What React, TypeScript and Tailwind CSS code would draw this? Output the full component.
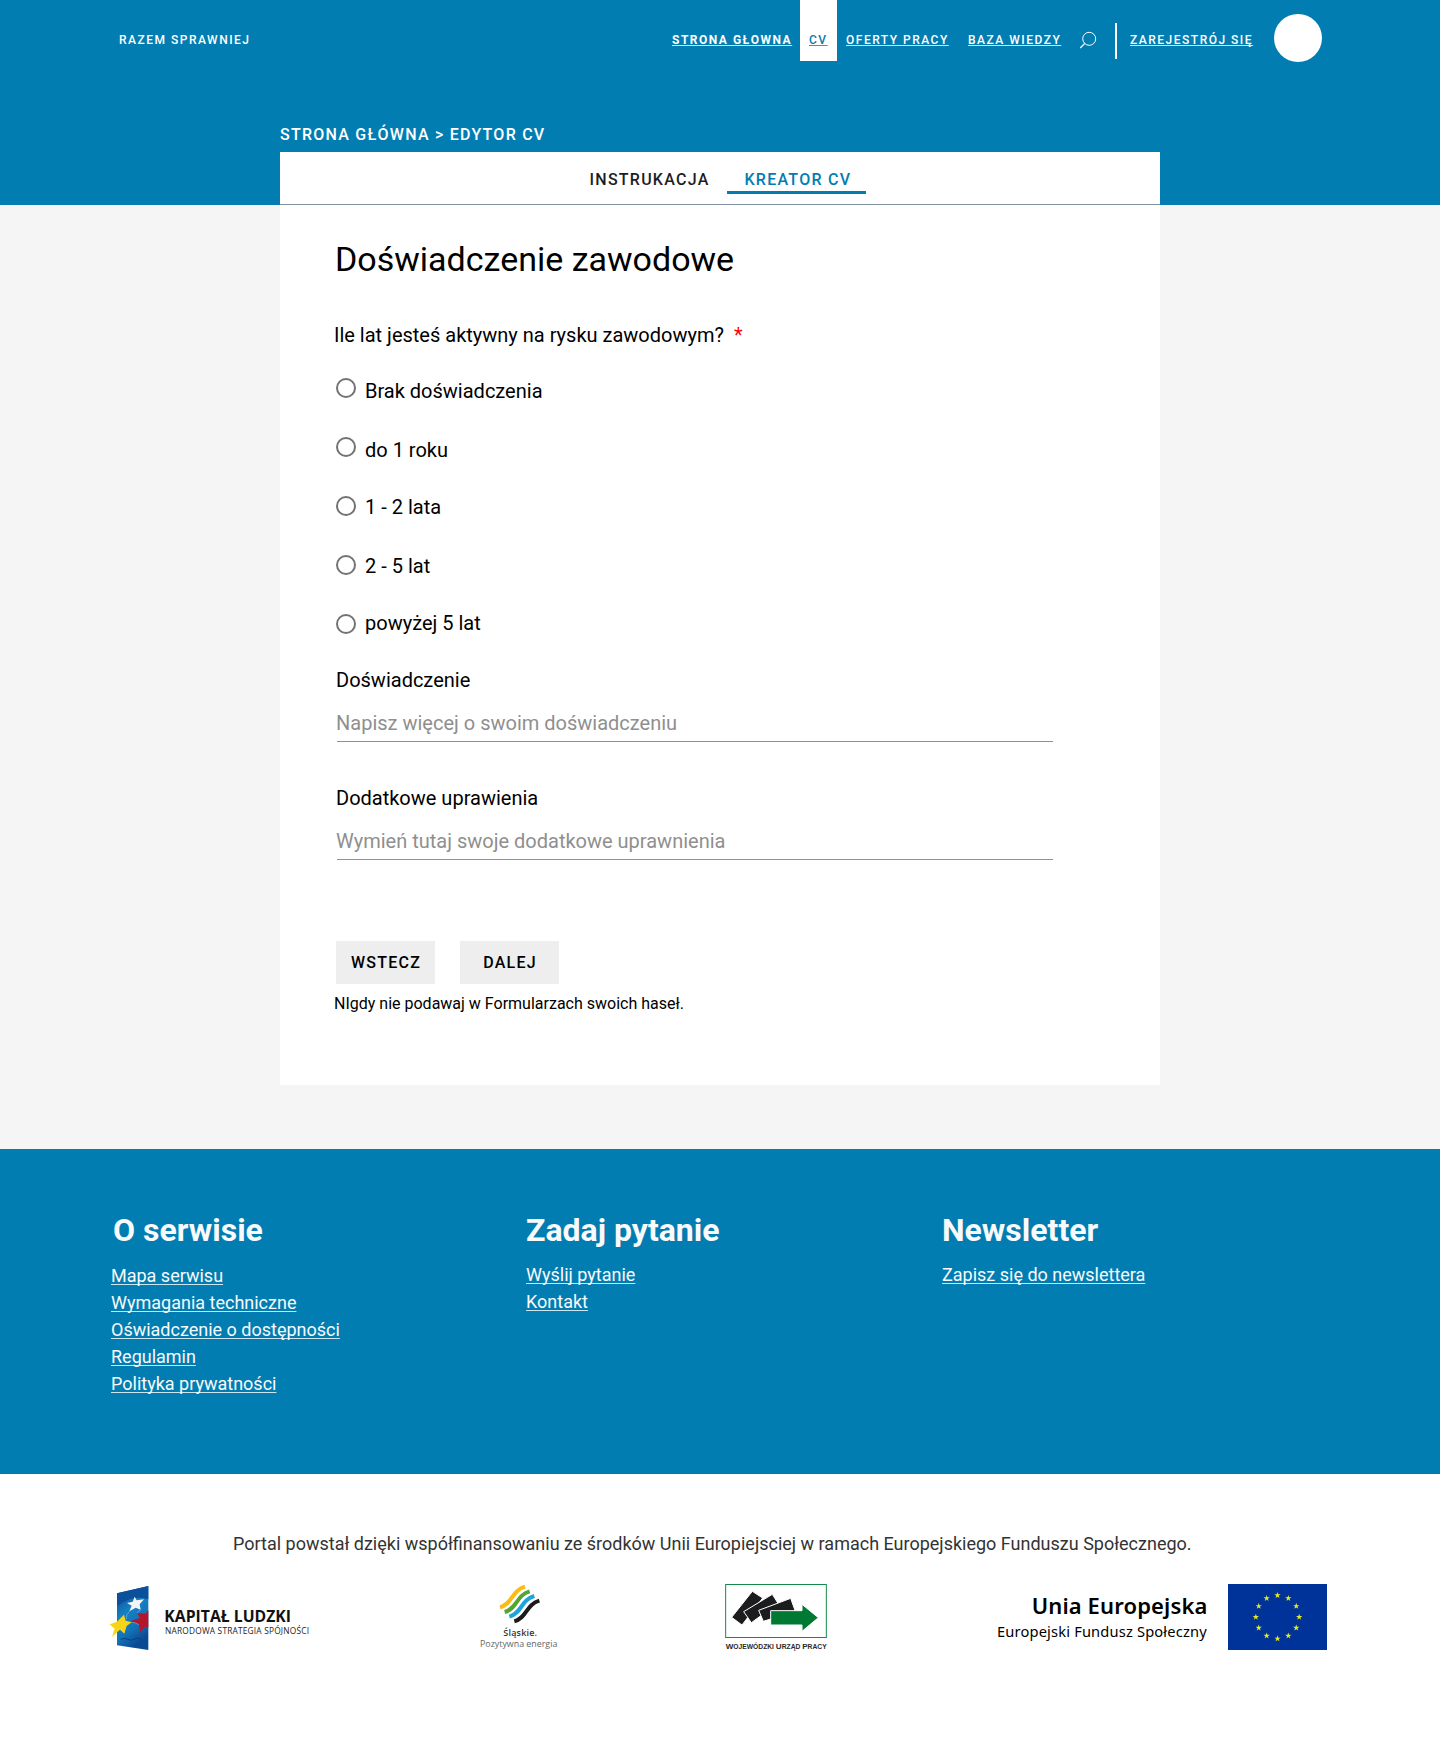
const navLink =
  "block w-fit whitespace-nowrap text-[12px] leading-4 font-medium tracking-[1.5px] underline decoration-1 underline-offset-[1px] [text-decoration-skip-ink:none]";

const options = [
  { label: "Brak doświadczenia", shift: "pt-[1px]" },
  { label: "do 1 roku", shift: "pt-[1px]" },
  { label: "1 - 2 lata", shift: "-mt-[1px]" },
  { label: "2 - 5 lat", shift: "-mt-[1px]" },
  { label: "powyżej 5 lat", shift: "-mt-[3px]" },
];

function SearchIcon() {
  return (
    <svg width="18" height="18" viewBox="0 0 18 18" fill="none" stroke="#fff" strokeWidth="1">
      <circle cx="10.2" cy="7.8" r="6.5" />
      <path d="M5.8 12.4 1.2 17" strokeWidth="1.3" />
    </svg>
  );
}

function Header() {
  return (
    <header className="flex h-[205px] flex-col bg-[#027db1] text-white">
      <div className="flex h-[76px] items-start pl-[119px]">
        <span className="mt-8 w-[553px] whitespace-nowrap text-[12px] leading-4 font-medium tracking-[1.5px]">
          RAZEM SPRAWNIEJ
        </span>
        <nav className="flex items-start">
          <div className="w-32 pt-8">
            <a className="block w-fit whitespace-nowrap text-[12px] leading-4 font-bold tracking-[1.5px] underline decoration-white/80 decoration-1 underline-offset-[1px] [text-decoration-skip-ink:none]">
              STRONA GŁOWNA
            </a>
          </div>
          <div className="h-[61px] w-[37px] bg-white pt-8 pl-[9px] text-[#027db1]">
            <a className={`${navLink} decoration-[#027db1]/80`}>CV</a>
          </div>
          <div className="ml-[9px] w-[122px] pt-8">
            <a className={`${navLink} decoration-white/80`}>OFERTY PRACY</a>
          </div>
          <div className="w-[111px] pt-8">
            <a className={`${navLink} decoration-white/80`}>BAZA WIEDZY</a>
          </div>
          <div className="mt-[31px] w-9">
            <SearchIcon />
          </div>
          <div className="mt-[23px] h-9 w-[2px] bg-white" />
          <div className="ml-[13px] w-36 pt-8">
            <a className={`${navLink} decoration-white/80`}>ZAREJESTRÓJ SIĘ</a>
          </div>
          <div className="mt-[14px] size-12 rounded-full bg-white" />
        </nav>
      </div>
      <div className="mx-auto mt-[46px] w-[880px]">
        <p className="h-[30px] text-[16px] leading-[25px] font-medium tracking-[1.25px]">
          STRONA GŁÓWNA &gt; EDYTOR CV
        </p>
        <div className="flex h-[53px] border-b border-[#7f93a1] bg-white pt-[15px] text-[16px] leading-[25px] font-medium tracking-[1.25px]">
          <a className="ml-[309px] w-[138px] pl-[0.5px] text-[#1d1d1f]">INSTRUKACJA</a>
          <a className="h-[27px] w-[139px] border-b-[3px] border-[#027db1] pl-[17.5px] text-[#027db1]">
            KREATOR CV
          </a>
        </div>
      </div>
    </header>
  );
}

function Field({ label, placeholder }: { label: string; placeholder: string }) {
  return (
    <div className="h-[118px] pl-14">
      <p className="leading-6">{label}</p>
      <div className="mt-[19px] ml-px h-[31px] w-[716px] border-b border-[#8a949c] leading-6 text-[#8f8f8f]">
        <span className="-ml-px">{placeholder}</span>
      </div>
    </div>
  );
}

function Form() {
  return (
    <main className="mx-auto h-[880px] w-[880px] bg-white text-[20px] text-black">
      <h1 className="pt-[34px] pl-[55px] text-[34px] leading-10">Doświadczenie zawodowe</h1>
      <p className="mt-11 pl-[54px] leading-6">
        Ile lat jesteś aktywny na rysku zawodowym?
        <span className="ml-[10px] text-[#ff0000]">*</span>
      </p>
      <div className="mt-[31px] pl-14">
        {options.map((o) => (
          <label key={o.label} className="flex h-[59px] items-start">
            <span className="size-5 rounded-full border-2 border-[#737373]" />
            <span className={`ml-[9px] leading-6 ${o.shift}`}>{o.label}</span>
          </label>
        ))}
      </div>
      <div className="-mt-[5px]">
        <Field label="Doświadczenie" placeholder="Napisz więcej o swoim doświadczeniu" />
        <Field label="Dodatkowe uprawienia" placeholder="Wymień tutaj swoje dodatkowe uprawnienia" />
      </div>
      <div className="mt-[37px] flex gap-[25px] pl-14 text-[16px] leading-[25px] font-medium tracking-[1.25px]">
        <button className="h-[43px] w-[99px] bg-[#eeeeee] pb-px pl-px">WSTECZ</button>
        <button className="h-[43px] w-[99px] bg-[#eeeeee] pb-px pl-px">DALEJ</button>
      </div>
      <p className="mt-[7px] pl-[54px] text-[16px] leading-[25px]">
        NIgdy nie podawaj w Formularzach swoich haseł.
      </p>
    </main>
  );
}

function FooterColumn({ title, links, className, titleClass }: { title: string; links: string[]; className: string; titleClass: string }) {
  return (
    <div className={className}>
      <h2 className={`text-[32px] leading-[38px] font-bold ${titleClass}`}>{title}</h2>
      <ul className="text-[18px] leading-[27px]">
        {links.map((l) => (
          <li key={l}>
            <a className="underline decoration-white/80 decoration-1 underline-offset-2 [text-decoration-skip-ink:none]">{l}</a>
          </li>
        ))}
      </ul>
    </div>
  );
}

function HumanCapitalLogo() {
  return (
    <svg width="201" height="75" viewBox="27 30 603 225">
      <defs>
        <linearGradient id="sail" x1="0" y1="0" x2="0.4" y2="1">
          <stop offset="0" stopColor="#0a3f86" />
          <stop offset="0.45" stopColor="#1680c4" />
          <stop offset="0.75" stopColor="#1272b8" />
          <stop offset="1" stopColor="#0a4a94" />
        </linearGradient>
      </defs>
      <path d="M51 70 145 48V240L51 226Z" fill="url(#sail)" />
      <path d="M51 70 145 48V88Q100 72 51 108Z" fill="#0c4f9a" />
      <path d="M62 208q12-6 22 0t20-1 20 2" fill="none" stroke="#0b3f80" strokeWidth="3" />
      <path d="M104 80 110 91 132 88 119 103 122 119 107 113 88 124 95 107 81 99 98 95Z" fill="#f2f4f6" />
      <path d="M145 121 136 131 112 129 119 144 92 153 117 164 121 188 134 170 145 172Z" fill="#b3152a" />
      <path d="M72 134 77 152 95 157 80 168 73 191 60 179 36 200 44 176 29 163 51 155Z" fill="#f7d516" />
      <path d="M88 124Q78 132 79 148M122 119Q116 122 112 129M95 157 Q104 156 117 164" fill="none" stroke="#6fb4de" strokeWidth="2" />
      <text x="193" y="157" fontFamily="Open Sans, sans-serif" fontWeight="700" fontSize="47" textLength="380" lengthAdjust="spacingAndGlyphs" fill="#111">KAPITAŁ LUDZKI</text>
      <text x="195" y="192" fontFamily="Open Sans, sans-serif" fontSize="25" textLength="432" fill="#222">NARODOWA STRATEGIA SPÓJNOŚCI</text>
    </svg>
  );
}

function SilesiaLogo() {
  const wave = "M0 62C38 52 34 12 75 0";
  return (
    <svg width="82" height="75" viewBox="54 30 246 225">
      <g fill="none" strokeWidth="12">
        <path d={wave} transform="translate(120 50)" stroke="#fbba16" />
        <path d={wave} transform="translate(134 64)" stroke="#55a532" />
        <path d={wave} transform="translate(148 78)" stroke="#1fa3dc" />
        <path d={wave} transform="translate(163 92)" stroke="#1b1b1d" />
      </g>
      <text x="130" y="198" fontFamily="Open Sans, sans-serif" fontWeight="600" fontSize="27" textLength="101" fill="#333">Śląskie.</text>
      <text x="60" y="232" fontFamily="Open Sans, sans-serif" fontWeight="400" fontSize="28" textLength="232" lengthAdjust="spacingAndGlyphs" fill="#666">Pozytywna energia</text>
    </svg>
  );
}

function LabourOfficeLogo() {
  return (
    <svg width="104" height="75" viewBox="42 30 312 225">
      <rect x="47" y="43.5" width="302" height="159" fill="#fff" stroke="#14894a" strokeWidth="3" />
      <g fill="#1c1c1e" stroke="#fff" strokeWidth="3">
        <path d="M65 142 127 64 158 84 96 165Z" />
        <path d="M101 125 187 73 204 100 124 158Z" />
        <path d="M146 121 242 85 256 124 160 154Z" />
      </g>
      <path d="M182 122H276V103L325 143 276 184V165H182Z" fill="#007a33" stroke="#fff" strokeWidth="3" />
      <text x="47" y="237" fontFamily="Liberation Sans, sans-serif" fontWeight="700" fontSize="20" textLength="303" lengthAdjust="spacingAndGlyphs" fill="#2a2a2a">
        <tspan fontSize="24">W</tspan>OJEWÓDZKI <tspan fontSize="24">U</tspan>RZĄD <tspan fontSize="24">P</tspan>RACY
      </text>
    </svg>
  );
}

function EuropeanUnionLogo() {
  const star = "M0-9 2.1-2.8H8.6L3.4 1.1 5.3 7.3 0 3.6-5.3 7.3-3.4 1.1-8.6-2.8H-2.1Z";
  return (
    <svg width="332" height="75" viewBox="48 30 996 225">
      <text x="155" y="132" fontFamily="Noto Sans, sans-serif" fontWeight="600" fontSize="66" textLength="527" fill="#000">Unia Europejska</text>
      <text x="51" y="200" fontFamily="Noto Sans, sans-serif" fontSize="44" textLength="629" fill="#000">Europejski Fundusz Społeczny</text>
      <rect x="744" y="42" width="297" height="198" fill="#003399" />
      {Array.from({ length: 12 }, (_, i) => {
        const a = (i * Math.PI) / 6;
        return (
          <path key={i} d={star} fill="#e3e829" transform={`translate(${892.5 + 65 * Math.sin(a)} ${141 - 65 * Math.cos(a)}) scale(1.1)`} />
        );
      })}
    </svg>
  );
}

export default function App() {
  return (
    <div className="h-[1737px] w-[1440px] overflow-hidden bg-white font-[Roboto,sans-serif]">
      <Header />
      <div className="h-[944px] bg-[#f5f5f5]">
        <Form />
      </div>
      <footer>
        <div className="flex h-[325px] bg-[#027db1] pt-[62px] pl-[111px] text-[#f8fafb]">
          <FooterColumn
            className="w-[415px]"
            titleClass="mb-[13px] pl-[2px]"
            title="O serwisie"
            links={["Mapa serwisu", "Wymagania techniczne", "Oświadczenie o dostępności", "Regulamin", "Polityka prywatności"]}
          />
          <FooterColumn className="w-[416px]" titleClass="mb-3" title="Zadaj pytanie" links={["Wyślij pytanie", "Kontakt"]} />
          <FooterColumn className="w-[300px]" titleClass="mb-3" title="Newsletter" links={["Zapisz się do newslettera"]} />
        </div>
        <p className="pt-14 pl-[233px] text-[18px] leading-[27px] whitespace-nowrap text-[#333333]">
          Portal powstał dzięki współfinansowaniu ze środków Unii Europiejsciej w ramach Europejskiego Funduszu Społecznego.
        </p>
        <div className="mt-[23px] flex pl-[109px]">
          <HumanCapitalLogo />
          <div className="ml-[168px]">
            <SilesiaLogo />
          </div>
          <div className="ml-[164px]">
            <LabourOfficeLogo />
          </div>
          <div className="ml-[168px]">
            <EuropeanUnionLogo />
          </div>
        </div>
      </footer>
    </div>
  );
}
